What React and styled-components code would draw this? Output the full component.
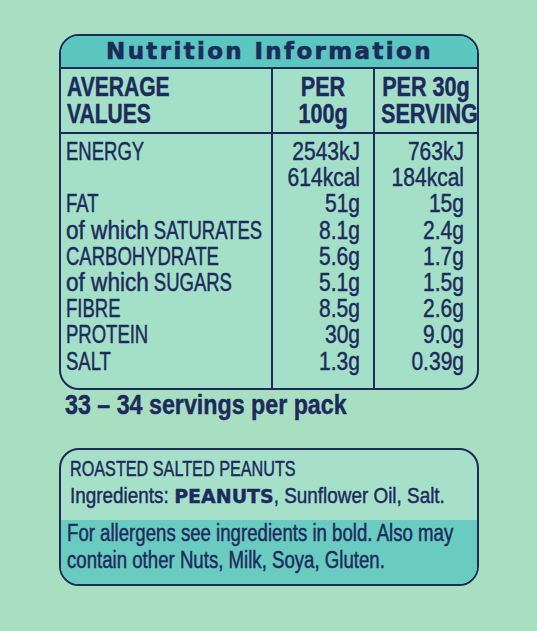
import styled, { createGlobalStyle } from 'styled-components';

const NAVY = '#1c2a5c';
const SANS = '"Liberation Sans", Arial, sans-serif';

const nutrients = [
  { label: 'ENERGY', per100: '2543kJ', perServing: '763kJ' },
  { label: '', per100: '614kcal', perServing: '184kcal' },
  { label: 'FAT', per100: '51g', perServing: '15g' },
  { lower: 'of which', label: 'SATURATES', per100: '8.1g', perServing: '2.4g' },
  { label: 'CARBOHYDRATE', per100: '5.6g', perServing: '1.7g' },
  { lower: 'of which', label: 'SUGARS', per100: '5.1g', perServing: '1.5g' },
  { label: 'FIBRE', per100: '8.5g', perServing: '2.6g' },
  { label: 'PROTEIN', per100: '30g', perServing: '9.0g' },
  { label: 'SALT', per100: '1.3g', perServing: '0.39g' },
];

export default function App() {
  return (
    <>
      <GlobalStyle />
      <Page>
        <Panel>
          <Title>Nutrition Information</Title>
          <Grid>
            <HeadCell>
              <Squeeze $k={0.78}>
                AVERAGE
                <br />
                VALUES
              </Squeeze>
            </HeadCell>
            <HeadCell $center $divider>
              <Squeeze $k={0.8}>
                PER
                <br />
                100g
              </Squeeze>
            </HeadCell>
            <HeadCell $center $divider>
              <Squeeze $k={0.8}>
                PER 30g
                <br />
                SERVING
              </Squeeze>
            </HeadCell>

            <BodyCell>
              <Squeeze $k={0.74}>
                {nutrients.map((n, i) => (
                  <div key={i}>
                    {n.lower && <Lower>{n.lower}</Lower>} {n.label || '\u00a0'}
                  </div>
                ))}
              </Squeeze>
            </BodyCell>
            <BodyCell $right $divider>
              <Squeeze $k={0.84}>
                {nutrients.map((n, i) => (
                  <div key={i}>{n.per100}</div>
                ))}
              </Squeeze>
            </BodyCell>
            <BodyCell $right $divider>
              <Squeeze $k={0.84}>
                {nutrients.map((n, i) => (
                  <div key={i}>{n.perServing}</div>
                ))}
              </Squeeze>
            </BodyCell>
          </Grid>
        </Panel>

        <Servings>
          <Squeeze $k={0.83}>33 – 34 servings per pack</Squeeze>
        </Servings>

        <IngredientsBox>
          <IngredientsTop>
            <Squeeze $k={0.72}>ROASTED SALTED PEANUTS</Squeeze>
            <Squeeze $k={0.84}>
              Ingredients: <Allergen>PEANUTS</Allergen>, Sunflower Oil, Salt.
            </Squeeze>
          </IngredientsTop>
          <AllergyNote>
            <Squeeze $k={0.81}>
              For allergens see ingredients in bold. Also may
              <br />
              contain other Nuts, Milk, Soya, Gluten.
            </Squeeze>
          </AllergyNote>
        </IngredientsBox>
      </Page>
    </>
  );
}

const GlobalStyle = createGlobalStyle`
  body {
    margin: 0;
    background: #a8dfc1;
    color: ${NAVY};
    font-family: ${SANS};
  }
`;

const Page = styled.div`
  width: 420px;
  margin: 0 auto;
  padding-top: 34px;
  height: 597px;
`;

// condensed type: the box is widened by 1/k then scaled back so alignment still works
const Squeeze = styled.div`
  width: calc(100% / ${(p) => p.$k});
  transform: scaleX(${(p) => p.$k});
  transform-origin: left top;
  white-space: nowrap;
  -webkit-text-stroke: 0.45px ${NAVY};
`;

const Panel = styled.div`
  border: 2px solid ${NAVY};
  border-radius: 20px;
  overflow: hidden;
  background: #a4e0c8;
`;

const Title = styled.div`
  background: #5cc7be;
  border-bottom: 2px solid ${NAVY};
  height: 31px;
  text-align: center;
  font-family: "DejaVu Sans", sans-serif;
  font-weight: 700;
  font-size: 23px;
  line-height: 31px;
  letter-spacing: 2.35px;
  -webkit-text-stroke: 0.6px ${NAVY};
  padding-left: 2px;
`;

const Grid = styled.div`
  display: grid;
  grid-template-columns: 210px 102px 104px;
`;

const HeadCell = styled.div`
  font-weight: 700;
  font-size: 27px;
  line-height: 27px;
  padding: 5px 6px 4px;
  border-bottom: 2px solid ${NAVY};
  text-align: ${(p) => (p.$center ? 'center' : 'left')};
  border-left: ${(p) => (p.$divider ? `2px solid ${NAVY}` : 'none')};
`;

const BodyCell = styled.div`
  font-size: 25px;
  line-height: 26.2px;
  padding: ${(p) => (p.$right ? '4px 13px 14px 6px' : '4px 6px 14px 5px')};
  text-align: ${(p) => (p.$right ? 'right' : 'left')};
  border-left: ${(p) => (p.$divider ? `2px solid ${NAVY}` : 'none')};
`;

// lowercase runs are less condensed than the capitals in the label face
const Lower = styled.span`
  display: inline-block;
  transform: scaleX(1.22);
  transform-origin: left;
  margin-right: 20px;
`;

const Servings = styled.div`
  font-weight: 700;
  font-size: 28px;
  line-height: 31px;
  padding: 0 6px;
  margin-top: -1px;
`;

const IngredientsBox = styled.div`
  margin-top: 28px;
  border: 2px solid ${NAVY};
  border-radius: 20px;
  overflow: hidden;
  background: #a6e0c9;
`;

const IngredientsTop = styled.div`
  font-size: 22.5px;
  line-height: 27px;
  padding: 5px 8px 10px 9px;
`;

// bold allergen set in a wide face; un-squeezed so it keeps its natural width
const Allergen = styled.span`
  display: inline-block;
  font-family: "DejaVu Sans", sans-serif;
  font-weight: 700;
  font-size: 19px;
  -webkit-text-stroke: 0.4px ${NAVY};
  transform: scaleX(1.19);
  transform-origin: left;
  margin-right: 19px;
`;

const AllergyNote = styled.div`
  background: #6acbc0;
  font-size: 23px;
  line-height: 27px;
  padding: 0 8px 10px 6px;
`;
